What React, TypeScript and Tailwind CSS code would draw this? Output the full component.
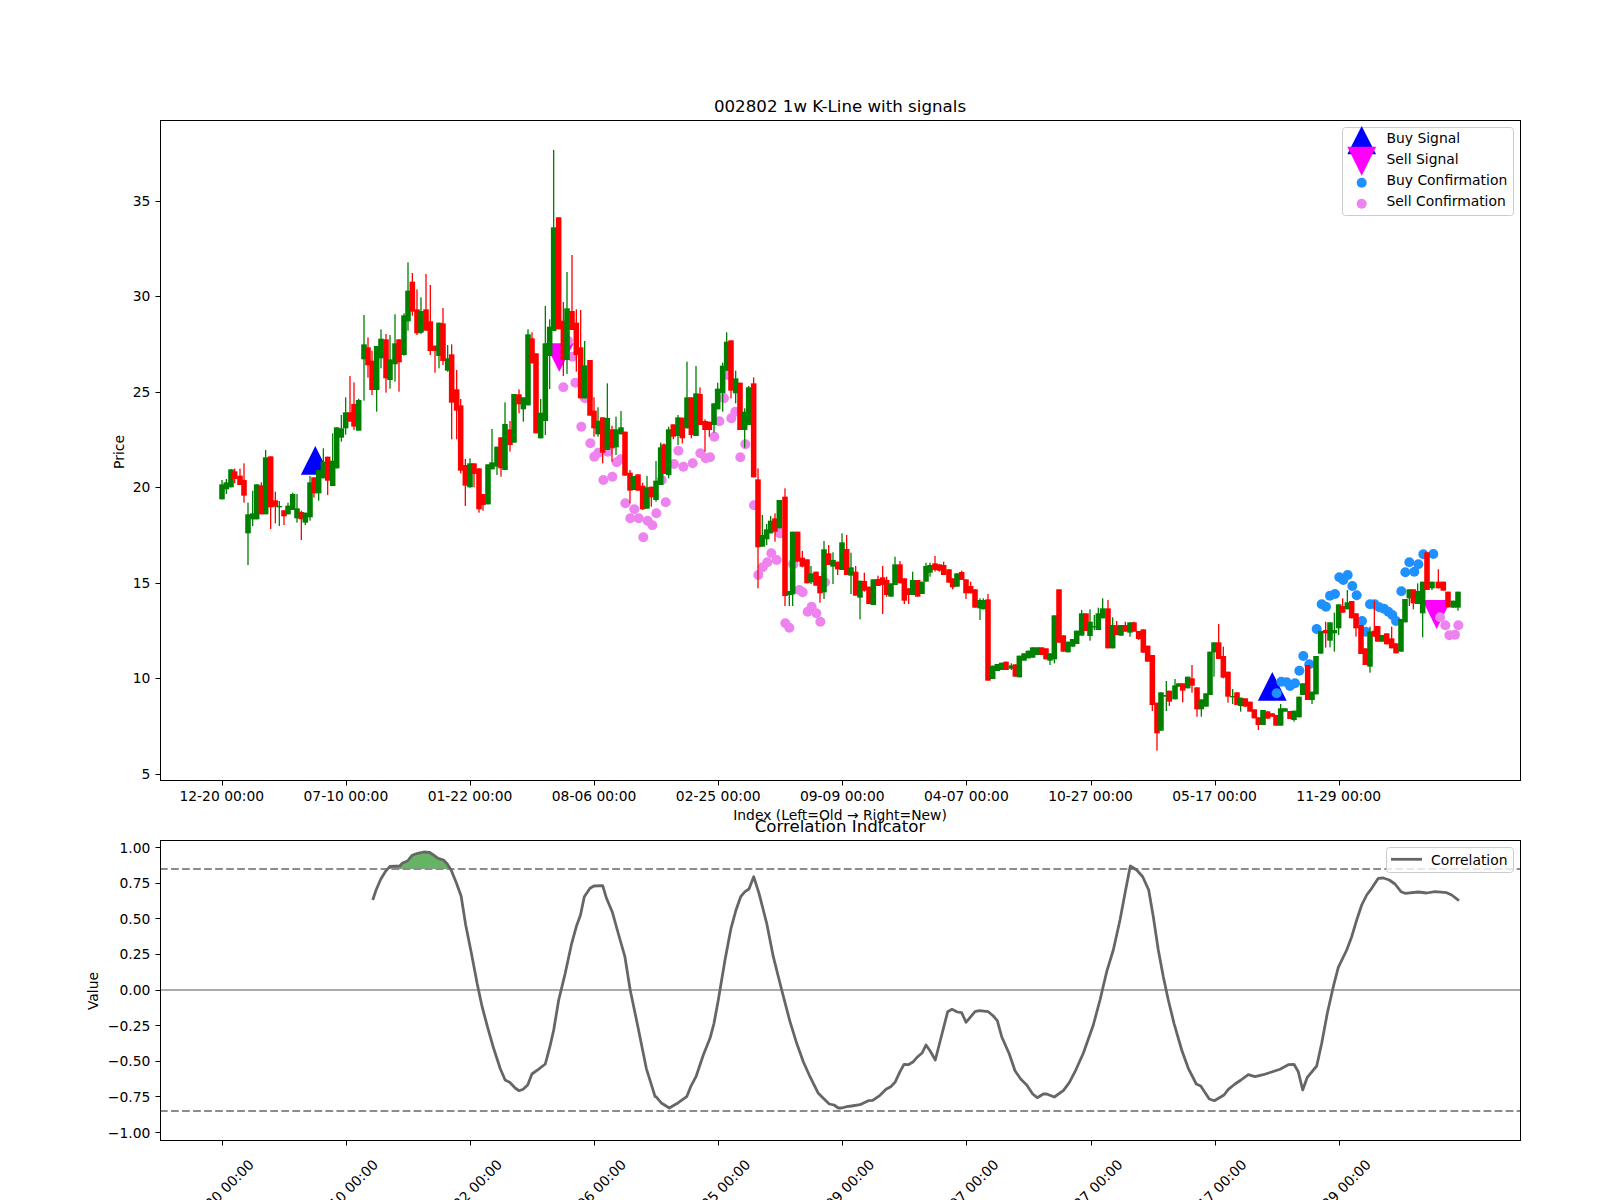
// K-line figure: two chart panels stacked on a white page.
type Raw = [number, number, number, number?, number?];

const GREEN = "#008000";
const RED = "#ff0000";

const X_TICKS = [
  "12-20 00:00",
  "07-10 00:00",
  "01-22 00:00",
  "08-06 00:00",
  "02-25 00:00",
  "09-09 00:00",
  "04-07 00:00",
  "10-27 00:00",
  "05-17 00:00",
  "11-29 00:00",
];
const tickX = (i: number) => 222.3 + 124.1 * i;
const snap = (v: number) => Math.floor(v) + 0.5;

// candles read off the chart: x, body top, body bottom, wick top, wick bottom (3x crops)
const seg1: [string, ...Raw][] = [
  ["g", 216, 1153, 1198, 1140],
  ["g", 229, 1147, 1168, 1137, 1182],
  ["g", 243, 1108, 1162],
  ["r", 254, 1114, 1137, 1106, 1150],
  ["r", 270, 1127, 1155, 1106],
  ["r", 282, 1140, 1187, 1090, 1208],
  ["g", 294, 1243, 1300, 1208, 1395],
  ["g", 308, 1240, 1258, 1172, 1278],
  ["g", 320, 1153, 1258],
  ["r", 334, 1156, 1243, 1147],
  ["g", 347, 1072, 1243, 1050],
  ["r", 362, 1069, 1222, 1069, 1287],
  ["r", 376, 1201, 1220, 1175, 1270],
  ["g", 388, 1218, 1222, 1203, 1278],
  ["r", 402, 1231, 1249, 1231, 1275],
  ["g", 414, 1217, 1243, 1208],
  ["g", 428, 1182, 1230, 1178],
  ["g", 441, 1225, 1255, 1182, 1268],
  ["r", 454, 1236, 1258, 1232, 1320],
  ["g", 466, 1238, 1268, 1238, 1275],
  ["g", 480, 1147, 1252, 1128, 1262],
  ["r", 492, 1132, 1180, 1132, 1193],
  ["g", 506, 1110, 1180, 1110, 1202],
  ["g", 520, 1085, 1135, 1045],
  ["r", 533, 1070, 1142, 1070, 1185],
  ["g", 548, 1082, 1158, 1000],
  ["g", 560, 982, 1105],
  ["g", 574, 985, 1013, 945, 1025],
  ["g", 587, 937, 985, 892, 1004],
  ["r", 600, 937, 965, 828],
  ["r", 612, 912, 980, 847, 990],
  ["g", 626, 900, 992, 896],
  ["g", 642, 733, 778, 645, 902],
  ["r", 654, 742, 796, 712, 833],
  ["r", 666, 782, 870, 752, 885],
  ["g", 680, 738, 870, 738, 935],
  ["g", 693, 716, 775, 688, 805],
  ["r", 708, 718, 835, 702, 878],
  ["g", 720, 778, 840, 705, 866],
  ["g", 735, 730, 793, 643, 845],
  ["r", 747, 718, 787, 718, 875],
  ["g", 762, 646, 765, 640, 767],
  ["g", 774, 572, 664, 487, 692],
  ["r", 787, 545, 635, 519, 647],
  ["r", 801, 628, 700, 568, 705],
  ["g", 813, 633, 698, 592, 702],
  ["r", 828, 628, 692, 522],
  ["r", 841, 664, 753, 555, 765],
  ["r", 855, 737, 753, 737, 818],
  ["g", 867, 668, 768, 668, 805],
  ["r", 879, 670, 783, 624, 795],
  ["g", 893, 775, 812, 735, 815],
];
const seg2: [string, ...Raw][] = [
  ["r", 5, 763, 908, 733, 1018],
  ["r", 20, 868, 932, 810, 1018],
  ["r", 32, 916, 1112, 897, 1120],
  ["r", 46, 1095, 1157, 1077, 1218],
  ["g", 60, 1090, 1162, 1075, 1163],
  ["r", 72, 1090, 1122, 1090, 1162],
  ["r", 87, 1105, 1228, 1105, 1238],
  ["r", 99, 1182, 1215, 1182, 1232],
  ["g", 114, 1093, 1213],
  ["g", 126, 1087, 1108, 987],
  ["g", 141, 1040, 1100, 1040, 1125],
  ["r", 153, 1012, 1105, 1012, 1130],
  ["g", 165, 972, 1110, 907],
  ["r", 180, 988, 1035, 963, 1055],
  ["g", 192, 882, 1028],
  ["r", 207, 883, 913, 868, 940],
  ["g", 220, 892, 928, 892, 965],
  ["g", 234, 703, 916, 688],
  ["r", 246, 715, 790, 697],
  ["r", 258, 760, 1000],
  ["g", 272, 938, 1015, 897],
  ["g", 286, 730, 963, 618, 1005],
  ["g", 299, 680, 768, 658, 867],
  ["g", 311, 382, 693, 150],
  ["r", 326, 352, 688],
  ["r", 340, 662, 780, 606, 828],
  ["g", 351, 625, 780, 516, 822],
  ["r", 366, 633, 690, 465],
  ["r", 379, 668, 765, 628, 815],
  ["r", 392, 742, 895, 630],
  ["g", 404, 796, 895, 723],
  ["r", 420, 780, 947],
  ["r", 432, 932, 985, 892, 1010],
  ["g", 444, 962, 1003, 922, 1010],
  ["r", 458, 952, 1058, 952, 1090],
  ["g", 472, 954, 1050, 850],
  ["r", 486, 988, 1045, 977, 1085],
  ["g", 498, 988, 1042, 950, 1065],
  ["g", 513, 982, 1003, 933],
  ["r", 525, 995, 1127],
  ["r", 540, 1118, 1172, 1110, 1210],
  ["g", 550, 1128, 1170],
  ["r", 564, 1123, 1172],
  ["r", 578, 1157, 1228, 1148, 1230],
  ["g", 591, 1162, 1226, 1128],
  ["r", 604, 1160, 1192, 1160, 1220],
  ["g", 618, 1142, 1200, 1083, 1205],
  ["g", 632, 1042, 1155, 1028],
  ["r", 642, 1033, 1122, 1030],
  ["g", 656, 988, 1125, 980, 1135],
  ["r", 670, 973, 1010, 973, 1018],
  ["g", 684, 952, 1008, 945, 1035],
  ["r", 697, 953, 1015, 953, 1030],
  ["g", 711, 892, 985, 785],
  ["r", 724, 892, 1005, 892, 1015],
  ["g", 738, 880, 1008, 798],
  ["r", 750, 882, 975, 862],
  ["r", 765, 963, 990, 958, 1055],
  ["r", 778, 965, 990, 965, 1010],
  ["g", 792, 910, 975, 910, 998],
  ["g", 803, 866, 928, 848],
  ["g", 818, 797, 880, 788, 935],
  ["g", 830, 725, 812, 697],
  ["r", 843, 721, 872, 721, 895],
  ["g", 857, 835, 880, 812, 910],
  ["r", 870, 848, 990],
  ["g", 884, 935, 990, 925, 1043],
  ["g", 896, 862, 975, 858],
  ["r", 911, 850, 1132, 832],
  ["r", 924, 1138, 1342, 1105, 1465],
  ["g", 937, 1305, 1340, 1245],
  ["g", 950, 1288, 1318, 1272, 1335],
  ["g", 962, 1262, 1300, 1248],
  ["r", 975, 1255, 1295, 1240, 1325],
  ["g", 988, 1200, 1285],
];
const seg3: [string, ...Raw][] = [
  ["r", 135, 350, 648, 325, 678],
  ["g", 148, 633, 645, 633, 678],
  ["g", 158, 455, 643, 455, 678],
  ["r", 173, 455, 545],
  ["r", 187, 533, 560, 513, 562],
  ["r", 201, 538, 610],
  ["g", 213, 580, 607, 558, 612],
  ["r", 228, 575, 617],
  ["r", 240, 588, 640, 588, 668],
  ["g", 252, 508, 637, 483, 657],
  ["r", 266, 520, 555, 495],
  ["g", 279, 540, 560, 517, 612],
  ["r", 293, 545, 568, 545, 585],
  ["g", 306, 487, 570, 460],
  ["r", 320, 507, 585, 465],
  ["g", 333, 562, 587, 518, 642],
  ["r", 347, 575, 647, 558],
  ["g", 360, 602, 653, 602, 718],
  ["r", 373, 603, 632, 578, 635],
  ["r", 387, 620, 672],
  ["g", 400, 598, 675],
  ["r", 414, 597, 618, 587],
  ["r", 428, 592, 615, 558, 702],
  ["r", 440, 600, 645, 590, 650],
  ["g", 453, 610, 650],
  ["g", 465, 553, 615, 530],
  ["r", 480, 553, 610, 543],
  ["r", 493, 595, 662, 595, 672],
  ["r", 506, 625, 645, 625, 672],
  ["g", 518, 600, 645, 575],
  ["r", 533, 600, 650],
  ["g", 546, 605, 642],
  ["g", 558, 558, 605, 548],
  ["g", 570, 555, 578, 548, 590],
  ["r", 585, 550, 570, 528, 575],
  ["r", 598, 553, 572, 553, 575],
  ["r", 611, 555, 585, 545],
  ["r", 627, 568, 608],
  ["r", 638, 595, 622, 595, 628],
  ["g", 651, 580, 620],
  ["r", 665, 576, 600, 572],
  ["r", 678, 598, 640, 598, 657],
  ["r", 692, 618, 640, 605],
  ["r", 705, 628, 683],
  ["g", 720, 660, 685, 655, 720],
  ["g", 730, 660, 688, 655],
  ["r", 744, 658, 902, 642],
  ["g", 758, 857, 897],
  ["g", 772, 852, 873],
  ["g", 785, 848, 870],
  ["r", 798, 845, 870],
  ["g", 814, 856, 866, 850, 870],
  ["r", 826, 853, 890],
  ["g", 838, 827, 892],
  ["g", 852, 820, 842],
  ["g", 865, 812, 835],
  ["g", 878, 802, 833],
  ["g", 892, 802, 825],
  ["r", 905, 802, 825],
  ["r", 918, 805, 838],
  ["g", 930, 820, 842, 820, 855],
  ["g", 943, 706, 838, 706, 850],
  ["r", 957, 628, 788],
  ["r", 970, 766, 815],
  ["g", 984, 785, 817],
  ["g", 998, 777, 800],
  ["g", 1010, 752, 792],
  ["g", 1025, 700, 767, 690],
];
const seg4: [string, ...Raw][] = [
  ["r", 18, 280, 333],
  ["g", 30, 305, 348, 268, 362],
  ["g", 43, 318, 322, 285, 330],
  ["g", 55, 280, 330, 263],
  ["g", 68, 265, 295, 235],
  ["r", 84, 265, 385, 240],
  ["g", 98, 315, 385, 292],
  ["r", 110, 316, 345, 303],
  ["g", 123, 315, 347],
  ["r", 136, 315, 335, 305],
  ["g", 150, 307, 338, 307, 350],
  ["r", 162, 307, 335, 305],
  ["r", 176, 333, 357, 333, 360],
  ["r", 190, 328, 398],
  ["r", 203, 377, 425],
  ["r", 217, 405, 555, 405, 573],
  ["r", 231, 548, 640, 548, 692],
  ["g", 243, 517, 632],
  ["g", 259, 525, 530, 483, 573],
  ["r", 268, 512, 545, 512, 558],
  ["g", 285, 496, 538, 477],
  ["g", 296, 490, 500],
  ["r", 308, 490, 512, 490, 547],
  ["g", 323, 470, 505],
  ["r", 336, 475, 497, 435, 518],
  ["r", 351, 502, 568, 502, 590],
  ["g", 364, 538, 568, 538, 590],
  ["g", 378, 520, 560],
  ["g", 390, 395, 525],
  ["g", 402, 367, 397, 367, 470],
  ["r", 416, 367, 417, 312],
  ["r", 430, 408, 473, 380, 475],
  ["r", 444, 455, 530, 455, 548],
  ["g", 458, 528, 532, 507, 552],
  ["r", 471, 517, 555],
  ["g", 482, 533, 558, 533, 575],
  ["r", 496, 535, 560],
  ["r", 510, 545, 575],
  ["r", 523, 568, 595],
  ["r", 535, 592, 615, 592, 630],
  ["g", 549, 570, 615],
  ["r", 563, 574, 596],
  ["r", 577, 580, 590],
  ["r", 588, 585, 617],
  ["g", 602, 565, 617, 552],
  ["g", 615, 565, 575],
  ["r", 630, 573, 597],
  ["g", 642, 572, 600, 572, 605],
  ["g", 657, 530, 592],
  ["g", 668, 490, 525],
  ["r", 683, 435, 540],
  ["g", 696, 515, 540, 515, 552],
  ["g", 708, 408, 523],
  ["g", 722, 333, 401],
  ["r", 737, 330, 340, 305, 383],
  ["g", 750, 307, 362, 307, 382],
  ["g", 763, 330, 340, 278, 395],
  ["g", 776, 253, 325, 253, 345],
  ["r", 788, 258, 278, 235],
  ["g", 802, 247, 268, 210],
  ["r", 815, 243, 295],
  ["r", 828, 280, 325, 280, 350],
  ["r", 843, 315, 402],
  ["r", 856, 385, 435],
  ["g", 870, 335, 440, 320, 458],
  ["r", 883, 332, 350, 242],
  ["r", 893, 318, 365],
  ["g", 906, 345, 365],
  ["r", 920, 340, 373],
  ["r", 935, 355, 385, 320],
  ["r", 948, 370, 400],
  ["g", 963, 297, 395],
  ["g", 975, 237, 307],
  ["g", 988, 208, 235, 208, 258],
  ["r", 1000, 208, 250, 208, 268],
  ["g", 1013, 213, 252, 190],
  ["g", 1028, 185, 280, 185, 352],
  ["r", 1041, 97, 210],
  ["g", 1056, 185, 205, 185, 210],
  ["r", 1075, 185, 205, 148],
  ["r", 1090, 185, 212],
  ["r", 1104, 215, 262],
  ["g", 1120, 242, 263],
  ["g", 1134, 215, 263, 215, 272],
];

const toCandles = (seg: [string, ...Raw][], ox: number, oy: number) =>
  seg.map(([c, x, t, b, wt, wb]) => ({
    color: c === "g" ? GREEN : RED,
    x: ox + x / 3,
    top: oy + t / 3,
    bottom: oy + b / 3,
    wickTop: oy + (wt ?? t) / 3,
    wickBottom: oy + (wb ?? b) / 3,
  }));

const candles = [
  ...toCandles(seg1, 150, 100),
  ...toCandles(seg2, 450, 100),
  ...toCandles(seg3, 740, 380),
  ...toCandles(seg4, 1080, 520),
];

const scale = (pts: number[][], ox: number, oy: number) =>
  pts.map(([x, y]) => [ox + x / 3, oy + y / 3]);

const sellDots = [
  ...scale(
    [
      [354, 722], [367, 770], [340, 862], [376, 848], [405, 895], [394, 980], [421, 1030], [433, 1070],
      [445, 1058], [473, 1055], [500, 1087], [512, 1078], [460, 1140], [487, 1130], [526, 1210],
      [553, 1228], [541, 1255], [566, 1255], [593, 1262], [607, 1276], [580, 1312], [619, 1240],
      [647, 1207], [635, 1140], [672, 1092], [700, 1100], [728, 1090], [685, 1052], [751, 1060],
      [767, 1075], [780, 1072], [793, 1010], [808, 964], [822, 895], [833, 825], [844, 955], [856, 935],
      [871, 1072], [886, 1033], [912, 1216], [925, 1425], [938, 1402], [952, 1387], [964, 1360],
      [980, 1380], [990, 1300], [1030, 1392],
    ],
    450,
    100,
  ),
  ...scale(
    [
      [120, 460], [160, 553], [178, 630], [188, 637], [136, 730], [148, 743], [203, 695], [215, 680],
      [229, 700], [241, 725], [255, 607],
    ],
    740,
    380,
  ),
  ...scale([[1080, 292], [1096, 316], [1108, 346], [1125, 344], [1135, 316]], 1080, 520),
];

const buyDots = scale(
  [
    [590, 520], [604, 485], [620, 487], [630, 498], [645, 490], [658, 452], [670, 408], [688, 433],
    [710, 327], [725, 253], [738, 260], [750, 227], [765, 222], [778, 172], [790, 180], [803, 165],
    [817, 198], [830, 226], [846, 303], [857, 335], [870, 253], [884, 253], [898, 262], [912, 266],
    [925, 275], [937, 285], [948, 303], [964, 214], [976, 157], [988, 127], [1003, 155], [1015, 133],
    [1030, 103], [1060, 102],
  ],
  1080,
  520,
);

const upTriangle = (x: number, apex: number, base: number) =>
  `${x},${apex} ${x - 14.4},${base} ${x + 14.4},${base}`;

function PriceChart() {
  const yTicks: [string, number][] = [
    ["35", 201.5],
    ["30", 296.5],
    ["25", 392.5],
    ["20", 487.5],
    ["15", 583.5],
    ["10", 678.5],
    ["5", 774.5],
  ];
  return (
    <svg width={1600} height={824} className="block overflow-visible">
      <text x={840} y={112} textAnchor="middle" className="text-[16.67px]">
        002802 1w K-Line with signals
      </text>

      <polygon points={upTriangle(315.3, 446, 474.7)} fill="#0000ff" />
      <polygon points={upTriangle(1272.3, 672, 700.7)} fill="#0000ff" />
      <polygon points={upTriangle(559.3, 371.7, 343.3)} fill="#ff00ff" />
      <polygon points={upTriangle(1436.7, 629, 600)} fill="#ff00ff" />
      {buyDots.map(([x, y], i) => (
        <circle key={i} cx={x} cy={y} r={5} fill="#1e90ff" />
      ))}
      {sellDots.map(([x, y], i) => (
        <circle key={i} cx={x} cy={y} r={5} fill="#ee82ee" />
      ))}

      {candles.map((c, i) => (
        <g key={i} fill={c.color} stroke="none">
          <rect x={c.x - 0.65} y={c.wickTop} width={1.3} height={c.wickBottom - c.wickTop} />
          <rect x={c.x - 2.78} y={c.top} width={5.56} height={c.bottom - c.top} />
        </g>
      ))}

      <rect x={160.5} y={120.5} width={1360} height={660} fill="none" stroke="#000" strokeWidth={1} />
      {yTicks.map(([label, y]) => (
        <g key={label}>
          <line x1={155.5} x2={160} y1={y} y2={y} stroke="#000" strokeWidth={1} />
          <text x={150.3} y={y + 4.7} textAnchor="end" className="text-[13.89px]">
            {label}
          </text>
        </g>
      ))}
      {X_TICKS.map((label, i) => (
        <g key={label}>
          <line x1={snap(tickX(i))} x2={snap(tickX(i))} y1={781} y2={785.5} stroke="#000" strokeWidth={1} />
          <text x={tickX(i) - 0.5} y={801} textAnchor="middle" className="text-[13.89px]">
            {label}
          </text>
        </g>
      ))}
      <text x={840} y={820} textAnchor="middle" className="text-[13.89px]">
        Index (Left=Old → Right=New)
      </text>
      <text textAnchor="middle" transform="translate(124 452) rotate(-90)" className="text-[13.89px]">
        Price
      </text>

      {/* legend */}
      <rect
        x={1342.5}
        y={127.5}
        width={171}
        height={88}
        rx={3}
        fill="#ffffff"
        fillOpacity={0.8}
        stroke="#cccccc"
        strokeWidth={1}
      />
      <polygon points={upTriangle(1361.7, 126, 154.3)} fill="#0000ff" />
      <polygon points={upTriangle(1361.7, 175.7, 146.7)} fill="#ff00ff" />
      <circle cx={1361.7} cy={182.7} r={5} fill="#1e90ff" />
      <circle cx={1361.7} cy={203.7} r={5} fill="#ee82ee" />
      {["Buy Signal", "Sell Signal", "Buy Confirmation", "Sell Confirmation"].map((t, i) => (
        <text key={t} x={1386.5} y={143.3 + i * 20.8} className="text-[13.89px]">
          {t}
        </text>
      ))}
    </svg>
  );
}

// correlation line, read from three crops
const corrLeft = [
  [817, 360], [826, 330], [838, 298], [850, 275], [862, 259], [888, 258], [895, 249], [908, 243],
  [920, 226], [935, 220], [950, 216], [965, 217], [975, 224], [988, 235], [1002, 240], [1012, 252],
  [1022, 270], [1036, 310], [1048, 348], [1060, 435], [1075, 520], [1090, 610], [1103, 680], [1118, 745],
  [1133, 805], [1150, 865], [1163, 900], [1175, 907], [1190, 925], [1200, 932], [1210, 928], [1222, 915],
  [1233, 882], [1250, 868], [1268, 852], [1280, 800], [1290, 750], [1303, 660], [1320, 580], [1337, 490],
  [1350, 437], [1360, 405], [1370, 350], [1385, 325], [1395, 318], [1418, 317], [1428, 355], [1443, 395],
  [1460, 465], [1476, 530], [1490, 630], [1510, 740], [1532, 865], [1555, 950],
].map(([x, y]) => [60 + x / 2.613, 780 + y / 3]);

const corrMid = scale(
  [
    [18, 950], [35, 970], [58, 984], [85, 968], [110, 950], [122, 920], [138, 890], [160, 825], [180, 775],
    [192, 730], [205, 660], [225, 540], [243, 445], [258, 390], [272, 350], [285, 335], [297, 327], [311, 290],
    [327, 340], [350, 430], [370, 530], [395, 630], [420, 725], [440, 790], [460, 845], [480, 890], [505, 940],
    [520, 955], [538, 972], [552, 975], [565, 984], [575, 984], [590, 980], [605, 978], [630, 974], [655, 962],
    [668, 961], [690, 946], [708, 928], [722, 920], [735, 907], [750, 875], [762, 853], [775, 854], [790, 845],
    [803, 830], [817, 818], [828, 795], [840, 812], [856, 840], [875, 765], [893, 695], [906, 688], [922, 696],
    [935, 698], [948, 727], [975, 695], [988, 692], [1015, 695], [1030, 708], [1042, 722], [1055, 770],
    [1078, 822], [1095, 872], [1112, 897], [1130, 915], [1148, 942], [1162, 953], [1180, 942], [1190, 942],
    [1213, 951], [1240, 932], [1258, 908], [1275, 875], [1300, 820], [1330, 735], [1350, 660], [1370, 575],
    [1390, 510], [1410, 420], [1425, 340],
  ],
  650,
  780,
);

const corrRight = scale(
  [
    [91, 258], [110, 270], [128, 290], [146, 330], [160, 410], [175, 510], [190, 590], [205, 660], [222, 730],
    [245, 810], [265, 865], [289, 912], [302, 918], [328, 957], [343, 962], [372, 945], [385, 928], [405, 912],
    [423, 900], [445, 884], [465, 890], [490, 884], [515, 876], [540, 868], [565, 854], [582, 853], [595, 875],
    [608, 930], [622, 892], [650, 858], [665, 790], [682, 700], [700, 620], [715, 562], [740, 510], [755, 470],
    [770, 420], [785, 375], [800, 345], [815, 325], [835, 295], [850, 294], [868, 300], [885, 312], [903, 335],
    [915, 340], [955, 336], [980, 339], [1005, 335], [1040, 338], [1055, 345], [1077, 362],
  ],
  1100,
  780,
);

const corr = [...corrLeft, ...corrMid, ...corrRight];
const toPoints = (pts: number[][]) => pts.map(([x, y]) => `${x.toFixed(1)},${y.toFixed(1)}`).join(" ");
const overBand = corrLeft.slice(4, 16);

function CorrelationChart() {
  const yTicks: [string, number][] = [
    ["1.00", 1],
    ["0.75", 0.75],
    ["0.50", 0.5],
    ["0.25", 0.25],
    ["0.00", 0],
    ["−0.25", -0.25],
    ["−0.50", -0.5],
    ["−0.75", -0.75],
    ["−1.00", -1],
  ];
  const toY = (v: number) => 990 - v * 142.5;
  return (
    <svg width={1600} height={376} viewBox="0 824 1600 376" className="block overflow-visible">
      <text x={840} y={831.5} textAnchor="middle" className="text-[16.67px]">
        Correlation Indicator
      </text>

      <polygon
        points={`${overBand[0][0] - 1},869 ${toPoints(overBand)} ${overBand[overBand.length - 1][0] + 3},869`}
        fill="#66b366"
      />
      <line x1={160} x2={1520} y1={990} y2={990} stroke="#ababab" strokeWidth={2.08} />
      {[869, 1111].map((y) => (
        <line
          key={y}
          x1={160}
          x2={1520}
          y1={y}
          y2={y}
          stroke="#8c8c8c"
          strokeWidth={2.08}
          strokeDasharray="7.7 3.33"
        />
      ))}
      <polyline
        points={toPoints(corr)}
        fill="none"
        stroke="#666666"
        strokeWidth={2.78}
        strokeLinejoin="round"
      />

      <rect x={160.5} y={840.5} width={1360} height={300} fill="none" stroke="#000" strokeWidth={1} />
      {yTicks.map(([label, v]) => (
        <g key={label}>
          <line x1={155.5} x2={160} y1={snap(toY(v))} y2={snap(toY(v))} stroke="#000" strokeWidth={1} />
          <text x={150.3} y={toY(v) + 5} textAnchor="end" className="text-[13.89px]">
            {label}
          </text>
        </g>
      ))}
      {X_TICKS.map((label, i) => (
        <g key={label}>
          <line x1={snap(tickX(i))} x2={snap(tickX(i))} y1={1141} y2={1145.5} stroke="#000" strokeWidth={1} />
          <text
            textAnchor="middle"
            transform={`translate(${tickX(i) - 1} 1192) rotate(-45)`}
            y={5}
            className="text-[13.89px]"
          >
            {label}
          </text>
        </g>
      ))}
      <text textAnchor="middle" transform="translate(98 991) rotate(-90)" className="text-[13.89px]">
        Value
      </text>

      {/* legend */}
      <rect
        x={1386.5}
        y={847.5}
        width={127}
        height={25}
        rx={3}
        fill="#ffffff"
        fillOpacity={0.8}
        stroke="#cccccc"
        strokeWidth={1}
      />
      <line x1={1391} x2={1422} y1={859.3} y2={859.3} stroke="#666666" strokeWidth={2.78} />
      <text x={1431} y={864.5} className="text-[13.89px]">
        Correlation
      </text>
    </svg>
  );
}

export default function App() {
  return (
    <div className="w-[1600px] h-[1200px] overflow-hidden bg-white flex flex-col font-['DejaVu_Sans',sans-serif]">
      <PriceChart />
      <CorrelationChart />
    </div>
  );
}
